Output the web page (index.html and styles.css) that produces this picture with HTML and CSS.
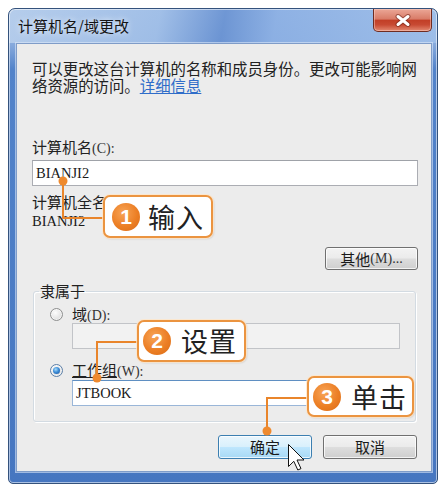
FILE: index.html
```html
<!DOCTYPE html>
<html lang="zh-CN">
<head>
<meta charset="utf-8">
<title>计算机名/域更改</title>
<link rel="stylesheet" href="styles.css">
</head>
<body>
<div class="window">
  <div class="titlebar">
    <span class="title">计算机名/域更改</span>
    <div class="close">
      <svg width="16" height="13" viewBox="0 0 16 13"><path d="M3 2.5 L13 10.5 M13 2.5 L3 10.5" stroke="#6a1f14" stroke-width="5" stroke-linecap="round" opacity="0.55"/><path d="M3 2.5 L13 10.5 M13 2.5 L3 10.5" stroke="#ffffff" stroke-width="3" stroke-linecap="round"/></svg>
    </div>
  </div>
  <div class="client">
    <p class="desc">可以更改这台计算机的名称和成员身份。更改可能影响网<br>络资源的访问。<a class="link">详细信息</a></p>
    <div class="lbl lbl1">计算机名<span class="a">(C):</span></div>
    <div class="field"><span class="val">BIANJI2</span></div>
    <div class="lbl lbl2">计算机全名:</div>
    <div class="static">BIANJI2</div>
    <div class="row-other"><div class="btn btn-other">其他<span class="a">(M)...</span></div></div>
    <fieldset class="group">
      <legend class="legend">隶属于</legend>
      <div class="group-inner">
        <div class="radio-row"><span class="radio"></span><span class="rlabel">域<span class="a">(D):</span></span></div>
        <div class="field field-in disabled"></div>
        <div class="radio-row row2"><span class="radio checked"></span><span class="rlabel"><u>工作组</u><span class="a">(W):</span></span></div>
        <div class="field field-in focus second"><span class="val">JTBOOK</span></div>
      </div>
    </fieldset>
    <div class="buttons">
      <div class="btn btn-ok">确定</div>
      <div class="btn">取消</div>
    </div>
  </div>
</div>

<svg class="connectors" width="447" height="488" viewBox="0 0 447 488">
  <path d="M63 181 V218 H105" fill="none" stroke="#e9852b" stroke-width="2"/>
  <path d="M97 378 V342 H139" fill="none" stroke="#e9852b" stroke-width="2"/>
  <path d="M267 431 V398 H309" fill="none" stroke="#e9852b" stroke-width="2"/>
  <circle cx="63" cy="181" r="4.5" fill="#ee8a2f"/>
  <circle cx="97" cy="378" r="4.5" fill="#ee8a2f"/>
  <circle cx="267" cy="431" r="4.5" fill="#ee8a2f"/>
</svg>

<div class="callout c1"><span class="num">1</span><span class="word">输入</span></div>
<div class="callout c2"><span class="num">2</span><span class="word">设置</span></div>
<div class="callout c3"><span class="num">3</span><span class="word">单击</span></div>

<svg class="cursor" width="18" height="28" viewBox="0 0 18 28">
  <path d="M0.5 0.5 V22.5 L5.8 17.3 L9.8 26 L13 24.6 L9 16 H16 Z" fill="#ffffff" stroke="#111111" stroke-width="1" stroke-linejoin="miter"/>
</svg>
</body>
</html>
```
FILE: styles.css
```css
html, body {
  margin: 0;
  padding: 0;
}
body {
  position: relative;
  width: 447px;
  height: 488px;
  overflow: hidden;
  background: #ffffff;
  font-family: "Noto Sans CJK SC", sans-serif;
  color: #222222;
}

/* window frame */
.window {
  box-sizing: border-box;
  width: 430px;
  height: 476px;
  margin: 8px 0 0 8px;
  border: 1px solid #34527c;
  border-radius: 7px 7px 5px 5px;
  padding: 0 5px 11px 7px;
  display: flex;
  flex-direction: column;
  background:
    linear-gradient(100deg, rgba(184,207,236,0.9) 0%, rgba(162,192,232,0.85) 35%, rgba(100,142,208,0.8) 50%, rgba(140,176,228,0.85) 62%, rgba(160,192,234,0.85) 100%) top / 100% 34px no-repeat,
    linear-gradient(#9dbbe5 0, #86a9dc 36px, #5283ca 60px, #4676c0 100%);
  box-shadow: inset 0 0 0 1px rgba(255,255,255,0.55);
}

.titlebar {
  height: 34px;
  display: flex;
  justify-content: space-between;
  align-items: flex-start;
  padding-left: 2px;
}
.title {
  font-size: 15px;
  line-height: 34px;
  color: #151515;
  text-shadow: 0 0 6px rgba(255,255,255,0.9);
}
.close {
  box-sizing: border-box;
  width: 59px;
  height: 23px;
  border: 1px solid #6e2c22;
  border-top: none;
  border-radius: 0 0 5px 5px;
  background: linear-gradient(#eba797 0%, #d97c68 45%, #c23f27 52%, #c84a33 72%, #e38a72 100%);
  display: flex;
  align-items: center;
  justify-content: center;
  box-shadow: inset 0 0 0 1px rgba(255,220,210,0.45);
}

/* client area */
.client {
  flex: 1;
  background: #ececec;
  border: 1px solid #7f9cc8;
  padding: 17px 13px 0 15px;
  display: flex;
  flex-direction: column;
  box-shadow: 0 0 0 1px rgba(220,232,248,0.6);
}
.desc {
  margin: 0;
  font-family: "Liberation Serif", "Noto Sans CJK SC", serif;
  font-size: 15.4px;
  line-height: 17.2px;
  white-space: nowrap;
  color: #222222;
}
.link {
  color: #2f6dc9;
  text-decoration: underline;
}
.a {
  font-family: "Liberation Serif", serif;
  font-size: 14px;
  color: #333333;
}
.lbl {
  font-size: 15px;
  line-height: 16px;
}
.lbl1 {
  margin-top: 44px;
  margin-bottom: 3px;
}
.lbl2 {
  margin-top: 8px;
}
.field {
  box-sizing: border-box;
  height: 26px;
  background: #ffffff;
  border: 1px solid #abadb3;
  border-top-color: #9fa2a8;
  display: flex;
  align-items: center;
  padding-left: 3px;
}
.val, .static {
  font-family: "Liberation Serif", serif;
  font-size: 14.5px;
  color: #1a1a1a;
}
.static {
  margin-top: 4px;
  line-height: 15px;
}
.row-other {
  margin-top: 18px;
  display: flex;
  justify-content: flex-end;
}

/* buttons */
.btn {
  box-sizing: border-box;
  width: 94px;
  height: 24px;
  border: 1px solid #707070;
  border-radius: 3px;
  background: linear-gradient(#f3f3f3 0%, #ebebeb 48%, #dddddd 52%, #cfcfcf 100%);
  box-shadow: inset 0 0 0 1px rgba(255,255,255,0.75);
  display: flex;
  align-items: center;
  justify-content: center;
  font-size: 15px;
  line-height: 16px;
  color: #1a1a1a;
}
.btn-other {
  width: 93px;
  height: 23px;
}
.btn-ok {
  border-color: #3c7fb1;
  background: linear-gradient(#eaf6fd 0%, #d9f0fc 48%, #bee6fd 52%, #a7d9f5 100%);
}
.buttons {
  margin-top: 13px;
  display: flex;
  justify-content: flex-end;
  gap: 11px;
  padding-right: 1px;
}

/* group box */
.group {
  margin: 13px 2px 0 1px;
  padding: 0;
  min-inline-size: 0;
  border: 1px solid #d3dbe2;
  border-radius: 3px;
  box-shadow: inset 1px 1px 0 #ffffff, 1px 1px 0 #ffffff;
}
.legend {
  margin-left: 5px;
  padding: 0 1px;
  font-size: 15px;
  line-height: 16px;
}
.group-inner {
  padding: 8px 15px 15px 16px;
}
.radio-row {
  display: flex;
  align-items: center;
  gap: 9px;
  height: 15px;
}
.rlabel {
  font-size: 15px;
  line-height: 15px;
}
.row2 {
  margin-top: 14px;
}
.radio {
  box-sizing: border-box;
  width: 13px;
  height: 13px;
  border-radius: 50%;
  border: 1px solid #8e8f8f;
  background: radial-gradient(circle at 40% 35%, #fdfdfd 0%, #e6e6e6 55%, #cfcfcf 100%);
  box-shadow: inset 0 0 0 1px rgba(255,255,255,0.6);
  position: relative;
}
.radio.checked {
  border-color: #5b7fa8;
}
.radio.checked::after {
  content: "";
  position: absolute;
  left: 2px;
  top: 2px;
  width: 7px;
  height: 7px;
  border-radius: 50%;
  background: radial-gradient(circle at 40% 35%, #a9dcfb 0%, #3d8ed8 45%, #1b4f98 100%);
}
.field-in {
  margin-left: 22px;
  margin-top: 1px;
}
.field-in.second {
  margin-top: 2px;
}
.disabled {
  background: #f2f2f2;
  border-color: #c2c4c8;
}
.focus {
  border-color: #9ab6d8;
  border-top-color: #5f8fc2;
}

/* annotations */
.connectors {
  position: absolute;
  left: 0;
  top: 0;
  pointer-events: none;
}
.callout {
  position: absolute;
  box-sizing: border-box;
  display: flex;
  align-items: center;
  gap: 8px;
  border: 2px solid #eb9440;
  border-radius: 7px;
  background: #ffffff;
  box-shadow: 0 0 0 1px rgba(255,230,200,0.8), 1px 1px 2px rgba(0,0,0,0.15);
}
.c1 {
  left: 103px;
  top: 195px;
  width: 110px;
  height: 43px;
  padding-left: 7px;
}
.c2 {
  left: 137px;
  top: 320px;
  width: 109px;
  height: 42px;
  padding-left: 4px;
  gap: 10px;
}
.c3 {
  left: 307px;
  top: 376px;
  width: 107px;
  height: 41px;
  padding-left: 4px;
  gap: 10px;
}
.num {
  width: 28px;
  height: 28px;
  border-radius: 50%;
  background: radial-gradient(circle at 40% 35%, #f7a457 0%, #ec7f25 55%, #d96a14 100%);
  color: #ffffff;
  font-family: "Liberation Sans", sans-serif;
  font-weight: bold;
  font-size: 21px;
  line-height: 28px;
  text-align: center;
  flex: none;
}
.word {
  font-size: 27px;
  line-height: 30px;
  color: #222222;
  letter-spacing: 1px;
}
.cursor {
  position: absolute;
  left: 288px;
  top: 444px;
}
```
